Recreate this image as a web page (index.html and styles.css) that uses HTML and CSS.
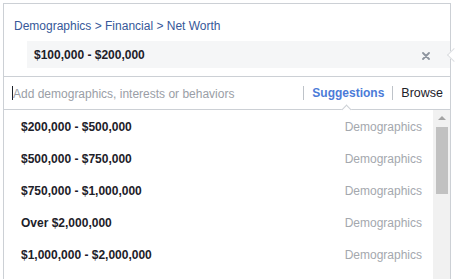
FILE: index.html
```html
<!DOCTYPE html>
<html>
<head>
    <title>Detailed targeting</title>
    <link rel="stylesheet" href="styles.css">
</head>
<body>
    <div class="picker">
        <!-- selected item -->
        <div class="selected">
            <div class="crumbs">Demographics &gt; Financial &gt; Net Worth</div>
            <div class="token">
                <span class="token-label">$100,000 - $200,000</span>
                <svg class="remove" width="8" height="8" viewBox="0 0 8 8">
                    <path d="M1 1 L7 7 M7 1 L1 7" stroke="#8d949e" stroke-width="1.8" stroke-linecap="round"/>
                </svg>
            </div>
            <span class="side-arrow"></span>
        </div>

        <!-- search row -->
        <div class="search">
            <span class="cursor"></span>
            <span class="placeholder">Add demographics, interests or behaviors</span>
            <div class="tabs">
                <span class="sep"></span>
                <span class="tab active">Suggestions</span>
                <span class="sep"></span>
                <span class="tab">Browse</span>
            </div>
        </div>

        <!-- results -->
        <div class="results">
            <ul class="list">
                <li class="row"><span class="name">$200,000 - $500,000</span><span class="kind">Demographics</span></li>
                <li class="row"><span class="name">$500,000 - $750,000</span><span class="kind">Demographics</span></li>
                <li class="row"><span class="name">$750,000 - $1,000,000</span><span class="kind">Demographics</span></li>
                <li class="row"><span class="name">Over $2,000,000</span><span class="kind">Demographics</span></li>
                <li class="row"><span class="name">$1,000,000 - $2,000,000</span><span class="kind">Demographics</span></li>
            </ul>
            <div class="scrollbar">
                <span class="arrow-up"></span>
                <span class="thumb"></span>
            </div>
        </div>
    </div>
</body>
</html>
```
FILE: styles.css
```css
/* page */
body {
    background-color: #fff;
    margin: 0;
    padding: 0;
    font-family: "Liberation Sans", Arial, sans-serif;
    font-size: 12px;
    color: #1d2129;
    overflow: hidden;
}

.picker {
    width: 448px;
    margin: 3px 0 0 3px;
}

/* selected item */
.selected {
    position: relative;
    border: 1px solid #ccd0d5;
    padding: 14px 0 8px 10px;
}

.crumbs {
    line-height: 16px;
    color: #365899;
}

.token {
    display: flex;
    align-items: center;
    justify-content: space-between;
    height: 27px;
    margin: 7px 0 0 13px;
    padding: 0 20px 0 7px;
    background-color: #f5f6f7;
}

.token-label {
    font-weight: bold;
}

.remove {
    margin-top: 2px;
}

.side-arrow {
    position: absolute;
    left: 445px;
    top: 46px;
    width: 9px;
    height: 9px;
    background: #fff;
    border-left: 1px solid #dddfe2;
    border-bottom: 1px solid #dddfe2;
    transform: rotate(45deg);
}

/* search row */
.search {
    display: flex;
    align-items: center;
    height: 32px;
    border: 1px solid #ccd0d5;
    border-top: none;
    padding: 0 7px 0 8px;
}

.cursor {
    width: 1px;
    height: 14px;
    background: #1d2129;
}

.placeholder {
    flex: 1;
    color: #9a9ea6;
    line-height: 16px;
    margin-top: 1px;
}

.tabs {
    display: flex;
    align-items: center;
}

.sep {
    width: 1px;
    height: 14px;
    background: #bec3c9;
}

.tab {
    position: relative;
    margin-left: 8px;
    margin-right: 8px;
    line-height: 16px;
    font-size: 12.5px;
}

.tab:last-child {
    margin-right: 0;
}

.tab.active {
    color: #4b7bd8;
    font-weight: bold;
    font-size: 12px;
}

.tab.active::after {
    content: "";
    position: absolute;
    left: 31px;
    bottom: -12px;
    width: 6px;
    height: 6px;
    background: #fff;
    border-top: 1px solid #ccd0d5;
    border-left: 1px solid #ccd0d5;
    transform: rotate(45deg);
}

/* results */
.results {
    display: flex;
    border-left: 1px solid #ccd0d5;
    border-right: 1px solid #ccd0d5;
    height: 175px;
}

.list {
    flex: 1;
    list-style: none;
    margin: 0;
    padding: 1px 0 0 0;
}

.row {
    display: flex;
    justify-content: space-between;
    align-items: center;
    height: 32px;
    padding: 0 11px 0 17px;
}

.name {
    font-weight: bold;
}

.kind {
    color: #a4a8ae;
}

.scrollbar {
    position: relative;
    width: 17px;
    background: #f1f1f1;
}

.arrow-up {
    position: absolute;
    left: 5px;
    top: 6px;
    width: 0;
    height: 0;
    border-left: 4px solid transparent;
    border-right: 4px solid transparent;
    border-bottom: 4px solid #a3a3a3;
}

.thumb {
    position: absolute;
    left: 3px;
    right: 2px;
    top: 17px;
    height: 67px;
    background: #c1c1c1;
}
```
